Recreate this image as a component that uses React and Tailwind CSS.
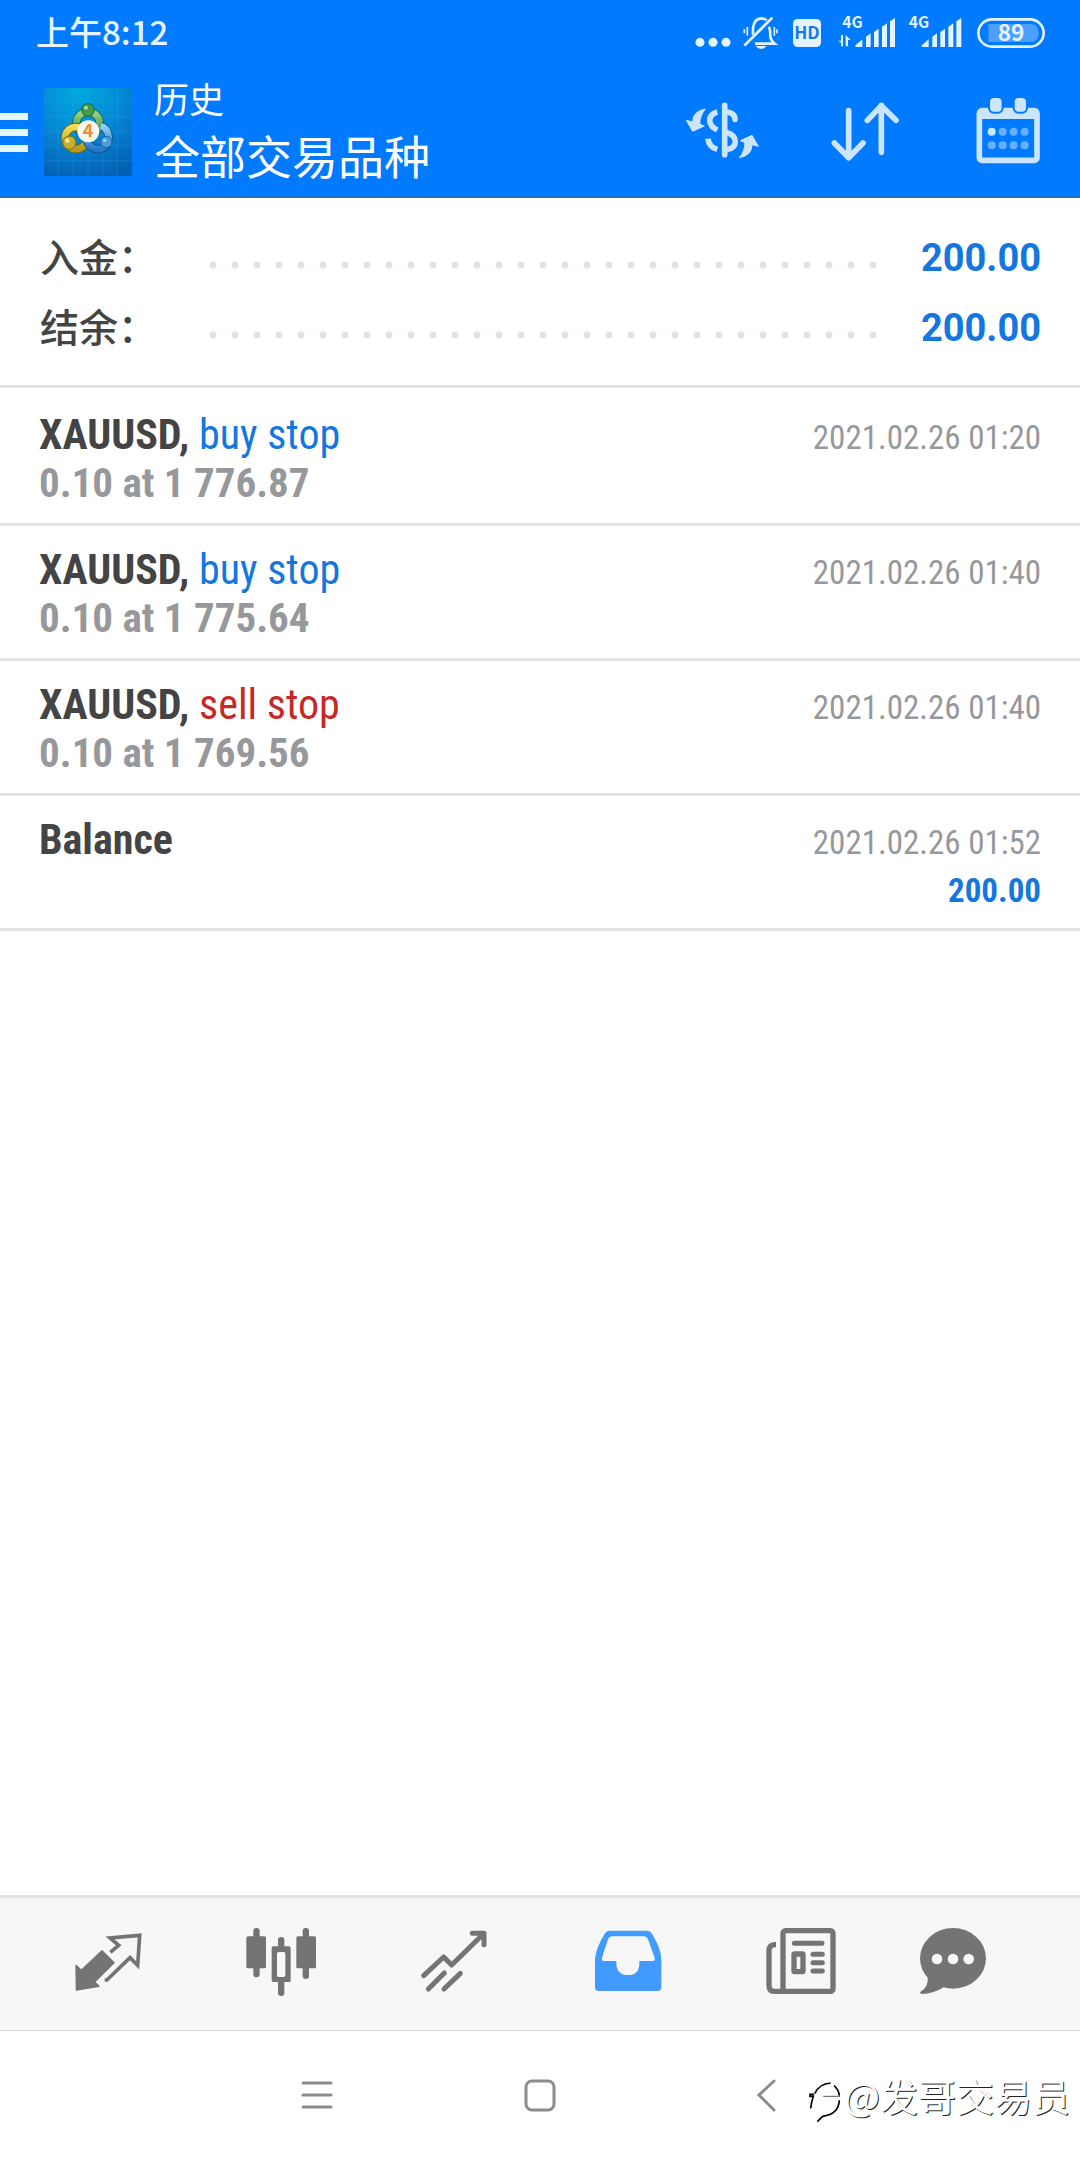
import React from "react";
import clsx from "clsx";

const SUMMARY = [
  { id: "deposit", label: "入金：", value: "200.00" },
  { id: "balance", label: "结余：", value: "200.00" },
];

const HISTORY = [
  { id: 1, symbol: "XAUUSD", type: "buy stop", volume: "0.10 at 1 776.87", time: "2021.02.26 01:20" },
  { id: 2, symbol: "XAUUSD", type: "buy stop", volume: "0.10 at 1 775.64", time: "2021.02.26 01:40" },
  { id: 3, symbol: "XAUUSD", type: "sell stop", volume: "0.10 at 1 769.56", time: "2021.02.26 01:40" },
  { id: 4, symbol: "Balance", time: "2021.02.26 01:52", amount: "200.00" },
];

const TYPE_COLORS = {
  "buy stop": "text-[#1477e0]",
  "sell stop": "text-[#c62828]",
};

const Signal = ({ data }) => (
  <svg
    className={clsx("h-9 overflow-visible", data ? "w-[60px]" : "w-[54px]")}
    viewBox={data ? "20 0 180 108" : "37 0 162 108"}
    fill="currentColor"
  >
    <text x="39" y="43" fontSize="47" fontWeight="700">4G</text>
    {data && (
      <path d="M41 63V97H35V86L27 80H35V63ZM49 97V63L64 78H56V97Z" />
    )}
    <path d="M77 95L99 76V99H80ZM110 68L124 58V99H110ZM134 54L148 44V99H134ZM158 38L173 28V99H158ZM182 22L197 12V99H182Z" />
  </svg>
);

const StatusBar = () => (
  <div className="flex h-16 items-center justify-between pl-9 pr-[34px] text-[#e3f3ff]">
    <span className="text-[33px] font-medium">上午8:12</span>
    <div className="flex items-center gap-3">
      <svg className="h-9 w-9" viewBox="0 0 108 108" fill="currentColor">
        <circle cx="15" cy="85" r="13.5" />
        <circle cx="54" cy="85" r="13.5" />
        <circle cx="93" cy="85" r="13.5" />
      </svg>
      <svg className="h-9 w-9" viewBox="0 0 108 108" fill="none" stroke="currentColor" strokeWidth="8">
        <path d="M30 62V42Q34 14 54 13Q64 13 71 19M78 38Q82 48 82 68Q84 80 95 89H36" />
        <path d="M4 95L88 11" />
        <path d="M4 46V58M13 39V65M94 39V65M102 46V58" strokeWidth="5" />
        <path d="M38 96H70Q64 105 54 105Q44 105 38 96Z" fill="currentColor" stroke="none" />
      </svg>
      <svg className="h-9 w-[33px]" viewBox="0 0 99 108">
        <rect x="6" y="15" width="84" height="84" rx="14" fill="currentColor" />
        <text x="48" y="76" textAnchor="middle" fontSize="52" fontWeight="700" fill="#1a78e6">HD</text>
      </svg>
      <Signal data />
      <Signal />
      <svg className="h-9 w-[72px]" viewBox="0 0 216 108">
        <rect x="13" y="16" width="196" height="82" rx="41" fill="none" stroke="currentColor" strokeWidth="8" />
        <path d="M43 30H172Q194 32 194 57Q194 82 172 84H43Z" fill="#4d9fff" />
        <text x="111" y="82" textAnchor="middle" fontSize="68" fontWeight="700" fill="currentColor">89</text>
      </svg>
    </div>
  </div>
);

const AppLogo = () => (
  <svg className="h-[88px] w-[88px]" viewBox="0 0 264 264">
    <defs>
      <radialGradient id="logo-bg" cx="40%" cy="5%" r="100%">
        <stop offset="0" stopColor="#00a8e0" />
        <stop offset="0.5" stopColor="#0588d4" />
        <stop offset="1" stopColor="#0560b4" />
      </radialGradient>
      <linearGradient id="logo-green" x1="0" y1="0" x2="0" y2="1">
        <stop offset="0" stopColor="#9bd686" />
        <stop offset="1" stopColor="#2f8a3a" />
      </linearGradient>
      <linearGradient id="logo-yellow" x1="0" y1="0" x2="0" y2="1">
        <stop offset="0" stopColor="#f0dc52" />
        <stop offset="1" stopColor="#b99a1c" />
      </linearGradient>
      <linearGradient id="logo-blue" x1="0" y1="0" x2="0" y2="1">
        <stop offset="0" stopColor="#8fd0f5" />
        <stop offset="1" stopColor="#2378c8" />
      </linearGradient>
    </defs>
    <rect width="264" height="264" fill="url(#logo-bg)" />
    <path
      d="M42 0V264M88 0V264M132 0V264M176 0V264M220 0V264M0 42H264M0 86H264M0 130H264M0 174H264M0 218H264"
      stroke="#4fc0f0"
      strokeOpacity="0.25"
      strokeWidth="2"
    />
    <circle cx="132" cy="106" r="35" fill="none" stroke="#1c5a38" strokeWidth="25" />
    <circle cx="132" cy="106" r="35" fill="none" stroke="url(#logo-green)" strokeWidth="20" />
    <circle cx="96" cy="150" r="33" fill="none" stroke="#6b6420" strokeWidth="25" />
    <circle cx="96" cy="150" r="33" fill="none" stroke="url(#logo-yellow)" strokeWidth="20" />
    <path d="M122 138Q130 182 162 184Q192 182 194 148Q192 120 170 114" fill="none" stroke="#0d4f8c" strokeWidth="25" />
    <path d="M122 138Q130 182 162 184Q192 182 194 148Q192 120 170 114" fill="none" stroke="url(#logo-blue)" strokeWidth="20" />
    <circle cx="132" cy="66" r="19" fill="#459a50" stroke="#1e6438" strokeWidth="3" />
    <circle cx="76" cy="164" r="20" fill="#c9ae2c" stroke="#7c6a1c" strokeWidth="3" />
    <circle cx="187" cy="162" r="17" fill="#4b9de0" stroke="#1d62a8" strokeWidth="3" />
    <circle cx="126" cy="59" r="6" fill="#a9dca0" />
    <circle cx="70" cy="158" r="7" fill="#f2e68a" />
    <circle cx="182" cy="157" r="5" fill="#a9d8fa" />
    <circle cx="133" cy="130" r="33" fill="#f7f7f2" />
    <text x="132" y="148" textAnchor="middle" fontSize="54" fontWeight="700" fill="#f08a3c">4</text>
  </svg>
);

const CurrencyIcon = () => (
  <svg className="h-[72px] w-[72px] overflow-visible" viewBox="0 0 216 216" fill="none" stroke="currentColor" strokeWidth="17">
    <path d="M116 34V182M124 54Q147 58 147 76" strokeLinecap="round" />
    <path d="M118 114Q148 122 148 143Q148 162 118 169" />
    <path d="M94 54Q71 60 71 80Q72 98 94 108M66 134Q68 158 94 166" />
    <g fill="currentColor" strokeWidth="3" strokeLinejoin="round">
      <path d="M58 45Q20 52 20 84L1 79L20 112L55 96L41 90Q42 64 58 45Z" />
      <path d="M160 191Q198 184 198 152L217 157L198 124L163 140L177 146Q176 172 160 191Z" />
    </g>
  </svg>
);

const SortIcon = () => (
  <svg
    className="h-[72px] w-[72px]"
    viewBox="0 0 216 216"
    fill="none"
    stroke="currentColor"
    strokeWidth="17"
    strokeLinecap="round"
    strokeLinejoin="round"
  >
    <path d="M59 50V190M16 147L59 191L102 147" />
    <path d="M157 175V34M115 79L157 35L201 79" />
  </svg>
);

const CalendarIcon = () => (
  <svg className="h-[72px] w-[72px]" viewBox="0 0 216 216">
    <rect x="22" y="50" width="173" height="149" rx="8" fill="none" stroke="currentColor" strokeWidth="17" />
    <path d="M28 46H189V75H28Z" fill="currentColor" />
    <rect x="51" y="9" width="41" height="47" rx="15" fill="currentColor" stroke="#007aff" strokeWidth="6" />
    <rect x="125" y="9" width="40" height="47" rx="15" fill="currentColor" stroke="#007aff" strokeWidth="6" />
    {[113, 154].map((y) =>
      [59, 92, 125, 158].map((x) => (
        <circle key={`${x}-${y}`} cx={x} cy={y} r="12" fill={x === 59 && y === 113 ? "#c8eaff" : "#66b0ff"} />
      ))
    )}
  </svg>
);

const Header = () => (
  <header className="border-b-2 border-[#1a6fd0] bg-[#007aff]">
    <StatusBar />
    <div className="flex h-[132px] items-center pr-9 pt-1 text-white">
      <button aria-label="Menu" className="flex w-11 flex-col gap-[9px]">
        <span className="h-[7px] w-7 bg-[#e8f6ff]" />
        <span className="h-[7px] w-7 bg-[#e8f6ff]" />
        <span className="h-[7px] w-7 bg-[#e8f6ff]" />
      </button>
      <AppLogo />
      <div className="ml-[22px] flex-1 pb-3">
        <p className="text-[35px] leading-[56px]">历史</p>
        <h1 className="text-[46px] leading-[56px]">全部交易品种</h1>
      </div>
      <div className="flex gap-[71px] pb-1 text-[#cce5ff]">
        <button aria-label="Symbol"><CurrencyIcon /></button>
        <button aria-label="Sort"><SortIcon /></button>
        <button aria-label="Period"><CalendarIcon /></button>
      </div>
    </div>
  </header>
);

const Summary = () => (
  <dl className="border-b-[3px] border-[#e3e3e3] pb-[23px] pl-10 pr-[39px] pt-6">
    {SUMMARY.map(({ id, label, value }) => (
      <div key={id} className="flex h-[70px] items-center">
        <dt className="w-[162px] pb-1 text-[39px] font-medium text-[#444]">{label}</dt>
        <span className="mt-4 h-2 flex-1 bg-[radial-gradient(circle,#e2e2e2_3px,transparent_4px)] bg-[length:22px_8px]" />
        <dd className="w-[157px] pt-0.5 text-right font-[Roboto] text-[38px] font-bold text-[#1477e0]">{value}</dd>
      </div>
    ))}
  </dl>
);

const HistoryRow = ({ deal }) => (
  <li className="flex justify-between border-b-[3px] border-[#e3e3e3] px-[39px] pb-4 pt-5 font-['Roboto_Condensed',Roboto,sans-serif] leading-[48px] first:pt-[23px]">
    <div className="font-bold">
      <p className="text-[42px] text-[#444]">
        {deal.symbol}
        {deal.type && (
          <>
            , <span className={clsx("font-normal", TYPE_COLORS[deal.type])}>{deal.type}</span>
          </>
        )}
      </p>
      <p className="h-12 text-[41px] text-[#97989b]">{deal.volume}</p>
    </div>
    <div className="-mb-1 pt-[3px] text-right text-[33px]">
      <p className="text-[#97989b]">{deal.time}</p>
      <p className="font-bold text-[#1477e0]">{deal.amount}</p>
    </div>
  </li>
);

const QuotesIcon = () => (
  <svg className="h-[72px] w-[72px]" viewBox="0 0 216 216">
    <path
      d="M12 121L28 136L90 77L126 113L68 171L81 184L13 195Z"
      fill="currentColor"
      stroke="currentColor"
      strokeWidth="4"
      strokeLinejoin="round"
    />
    <path d="M115 82L140 61L114 39L203 31L197 121L174 98L105 165H98" fill="none" stroke="currentColor" strokeWidth="11" />
  </svg>
);

const ChartIcon = () => (
  <svg className="h-[72px] w-[72px]" viewBox="0 0 216 216" fill="currentColor">
    <rect x="25" y="9" width="19" height="148" rx="9" />
    <rect x="4" y="34" width="59" height="96" rx="5" />
    <rect x="99" y="36" width="19" height="177" rx="9" />
    <rect x="80" y="64" width="57" height="107" rx="5" />
    <rect x="96" y="81" width="25" height="75" rx="5" fill="#f7f7f7" />
    <rect x="173" y="9" width="19" height="153" rx="9" />
    <rect x="154" y="34" width="59" height="96" rx="5" />
  </svg>
);

const TradeIcon = () => (
  <svg
    className="h-[72px] w-[72px]"
    viewBox="0 0 216 216"
    fill="none"
    stroke="currentColor"
    strokeWidth="15"
    strokeLinecap="round"
    strokeLinejoin="round"
  >
    <path d="M17 152L77 96L101 120L196 27" />
    <path d="M163 25H198V59" />
    <path d="M31 192L79 144M78 192L127 145" />
  </svg>
);

const HistoryIcon = () => (
  <svg className="h-[72px] w-[72px]" viewBox="0 0 216 216" fill="currentColor">
    <path
      fillRule="evenodd"
      d="M52 17H166Q175 17 180 26Q208 72 208 104V186Q208 198 196 198H21Q9 198 9 186V104Q10 72 38 26Q43 17 52 17ZM60 34Q52 34 48 43L30 98Q28 108 38 108H73V116Q75 150 108 150Q141 150 142 116V108H180Q190 108 188 98L168 43Q164 34 156 34Z"
    />
  </svg>
);

const NewsIcon = () => (
  <svg className="h-[72px] w-[72px]" viewBox="0 0 216 216" fill="none" stroke="currentColor" strokeWidth="16">
    <path d="M33 59H29Q12 61 12 76V182Q12 199 28 199H60" />
    <rect x="54" y="17" width="150" height="182" rx="8" />
    <rect x="87" y="87" width="27" height="53" rx="2" />
    <path d="M88 55H171M144 88H172M144 113H172M144 138H172" strokeLinecap="round" strokeWidth="15" />
  </svg>
);

const MessagesIcon = () => (
  <svg className="h-[72px] w-[72px]" viewBox="0 0 216 216" fill="currentColor">
    <ellipse cx="108" cy="100" rx="99" ry="91" />
    <path d="M32 156Q36 184 12 199Q6 205 14 207Q50 206 80 187L100 150Z" />
    <g fill="#f7f7f7">
      <circle cx="60" cy="102" r="16" />
      <circle cx="108" cy="102" r="16" />
      <circle cx="155" cy="102" r="16" />
    </g>
  </svg>
);

const TABS = [
  { name: "Quotes", icon: <QuotesIcon /> },
  { name: "Chart", icon: <ChartIcon /> },
  { name: "Trade", icon: <TradeIcon /> },
  { name: "History", icon: <HistoryIcon />, active: true },
  { name: "News", icon: <NewsIcon /> },
  { name: "Messages", icon: <MessagesIcon /> },
];

const TabBar = () => (
  <nav className="grid h-[136px] grid-cols-[173fr_173fr_173fr_173fr_173fr_130fr] border-b border-t-[3px] border-b-[#dedede] border-t-[#e3e3e3] bg-[#f7f7f7] pl-[21px] pr-[62px]">
    {TABS.map(({ name, icon, active }) => (
      <button
        key={name}
        aria-label={name}
        className={clsx("flex items-center justify-center pb-1.5", active ? "text-[#419bff]" : "text-[#747474]")}
      >
        {icon}
      </button>
    ))}
  </nav>
);

const SystemBar = () => (
  <div className="relative flex h-[129px] items-center justify-center gap-[189px] pb-0.5 text-[#8c8c8c]">
    <button aria-label="Recent apps">
      <svg className="h-9 w-9" viewBox="0 0 36 36" stroke="currentColor" strokeWidth="3" strokeLinecap="round">
        <path d="M6 6H34M6 18H34M6 30H34" />
      </svg>
    </button>
    <button aria-label="Home">
      <svg className="h-9 w-9" viewBox="0 0 36 36" fill="none" stroke="currentColor" strokeWidth="3">
        <rect x="4" y="4" width="28" height="29" rx="6" />
      </svg>
    </button>
    <button aria-label="Back">
      <svg className="h-9 w-9" viewBox="0 0 36 36" fill="none" stroke="currentColor" strokeWidth="3" strokeLinecap="round">
        <path d="M27 4L12 18L27 33" />
      </svg>
    </button>
    <div className="absolute right-2.5 top-9 flex items-center text-white">
      <svg className="h-14 w-9" viewBox="0 -42 108 168" fill="none" stroke="#000" strokeWidth="5">
        <path d="M8 82Q10 64 16 46H6V40H18" />
        <path d="M20 38Q34 8 68 6M78 14Q92 26 94 44M94 58Q92 100 44 106L28 122" />
        <path d="M46 46H96" strokeWidth="2" />
      </svg>
      <span className="text-[38px] leading-[56px] [text-shadow:1px_1px_0_#222]">@发哥交易员</span>
    </div>
  </div>
);

export default function App() {
  return (
    <div className="flex min-h-screen flex-col bg-white font-['Noto_Sans_CJK_SC',sans-serif]">
      <Header />
      <main className="flex-1">
        <Summary />
        <ul>
          {HISTORY.map((deal) => (
            <HistoryRow key={deal.id} deal={deal} />
          ))}
        </ul>
      </main>
      <TabBar />
      <SystemBar />
    </div>
  );
}
